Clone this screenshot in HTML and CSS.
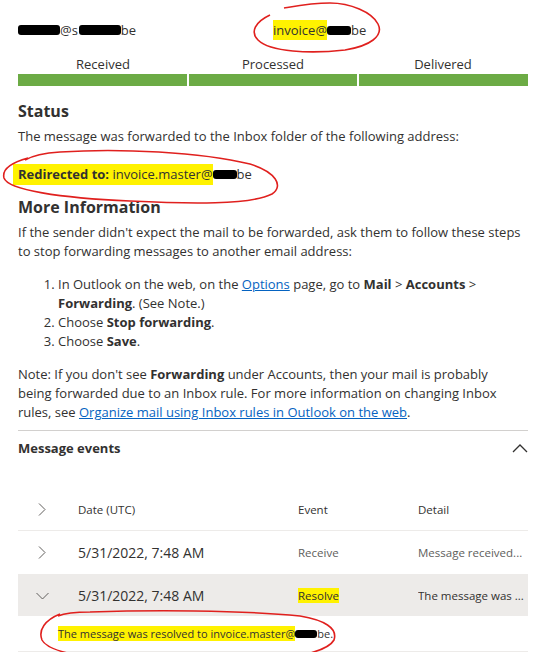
FILE: index.html
```html
<!DOCTYPE html>
<html>
<head>
<meta charset="utf-8">
<link rel="stylesheet" href="styles.css">
</head>
<body>
<div class="page">
  <div class="addresses">
    <div class="addr"><span class="redact r1"></span>@s<span class="redact r2"></span>be</div>
    <div class="addr"><span class="hl">invoice@</span><span class="redact r3"></span>be</div>
  </div>
  <div class="stages">
    <div class="stage">Received</div>
    <div class="stage">Processed</div>
    <div class="stage">Delivered</div>
  </div>
  <div class="bars">
    <div class="bar"></div>
    <div class="bar"></div>
    <div class="bar"></div>
  </div>

  <h2 class="heading status-h">Status</h2>
  <p class="text status-text">The message was forwarded to the Inbox folder of the following address:</p>
  <p class="text redirect"><span class="hl hl-wide"><b>Redirected to:</b> invoice.master@</span><span class="redact r4"></span>be</p>

  <h2 class="heading more-h">More Information</h2>
  <p class="text para">If the sender didn't expect the mail to be forwarded, ask them to follow these steps to stop forwarding messages to another email address:</p>
  <ol class="steps">
    <li>In Outlook on the web, on the <a class="link" href="#">Options</a> page, go to <b>Mail</b> &gt; <b>Accounts</b> &gt; <b>Forwarding</b>. (See Note.)</li>
    <li>Choose <b>Stop forwarding</b>.</li>
    <li>Choose <b>Save</b>.</li>
  </ol>
  <p class="text note">Note: If you don't see <b>Forwarding</b> under Accounts, then your mail is probably being forwarded due to an Inbox rule. For more information on changing Inbox rules, see <a class="link" href="#">Organize mail using Inbox rules in Outlook on the web</a>.</p>

  <div class="events-head">
    <span class="events-title">Message events</span>
    <svg class="chev-up" width="16" height="10" viewBox="0 0 16 10"><path d="M1 9 L8 2 L15 9" fill="none" stroke="#323130" stroke-width="1.3"/></svg>
  </div>

  <div class="table">
    <div class="row head-row">
      <div class="cell chev"><svg width="8" height="13" viewBox="0 0 8 13"><path d="M1 0.5 L7 6.5 L1 12.5" fill="none" stroke="#605e5c" stroke-width="1"/></svg></div>
      <div class="cell small">Date (UTC)</div>
      <div class="cell small">Event</div>
      <div class="cell small">Detail</div>
    </div>
    <div class="row">
      <div class="cell chev"><svg width="8" height="13" viewBox="0 0 8 13"><path d="M1 0.5 L7 6.5 L1 12.5" fill="none" stroke="#605e5c" stroke-width="1"/></svg></div>
      <div class="cell date">5/31/2022, 7:48 AM</div>
      <div class="cell small muted">Receive</div>
      <div class="cell small muted">Message received...</div>
    </div>
    <div class="row selected">
      <div class="cell chev"><svg width="13" height="8" viewBox="0 0 13 8"><path d="M0.5 1 L6.5 7 L12.5 1" fill="none" stroke="#605e5c" stroke-width="1"/></svg></div>
      <div class="cell date">5/31/2022, 7:48 AM</div>
      <div class="cell small"><span class="hl">Resolve</span></div>
      <div class="cell small">The message was ...</div>
    </div>
    <div class="detail-row">
      <span class="hl">The message was resolved to invoice.master@</span><span class="redact r5"></span>be.
    </div>
  </div>
</div>
<svg class="marks" width="544" height="669" viewBox="0 0 544 669">
  <path d="M270 15 C255 22 250 32 258 40 C270 52 310 54 345 50 C370 46 384 36 378 24 C372 12 350 3 330 3 C312 3 296 6 284 8" fill="none" stroke="#e0201e" stroke-width="1.6"/>
  <path d="M28 158 C10 163 2 170 4 178 C8 190 60 198 130 201 C190 204 250 205 272 194 C284 186 276 172 250 164 C200 152 120 148 60 152 C45 153 32 156 25 160" fill="none" stroke="#e0201e" stroke-width="1.6"/>
  <path d="M60 614 C45 620 38 630 42 640 C50 656 120 664 200 663 C270 662 325 656 334 640 C338 628 324 620 300 616 C240 610 150 610 90 612 C75 612 65 613 58 616" fill="none" stroke="#e0201e" stroke-width="1.6"/>
</svg>
</body>
</html>
```

FILE: styles.css
```css
* { box-sizing: border-box; }
body {
  margin: 0;
  background: #ffffff;
  color: #323130;
  font-family: "Open Sans", "Noto Sans", sans-serif;
  font-size: 13px;
  position: relative;
}
.page {
  padding: 20px 16px 0 18px;
  width: 544px;
}
.addresses {
  display: grid;
  grid-template-columns: 1fr 1fr;
  line-height: 20px;
  font-size: 13px;
}
.addr { display: flex; align-items: center; }
.redact {
  display: inline-block;
  height: 10px;
  background: #000;
  border-radius: 3px;
}
.r1 { width: 42px; }
.r2 { width: 42px; margin-left: 1px; }
.r3 { width: 24px; height: 9px; }
.r4 { width: 24px; height: 9px; }
.r5 { width: 22px; height: 8px; }
.hl { background: #fff200; }
.hl-wide { padding-left: 5px; margin-left: -5px; padding-top: 1px; padding-bottom: 2px; }
.stages {
  display: grid;
  grid-template-columns: 1fr 1fr 1fr;
  margin-top: 14px;
  line-height: 20px;
  text-align: center;
  font-size: 13px;
}
.bars {
  display: grid;
  grid-template-columns: 1fr 1fr 1fr;
  gap: 2px;
  height: 12px;
}
.bar { background: #6cab45; }
.heading {
  margin: 0;
  font-size: 16px;
  font-weight: 700;
  line-height: 22px;
}
.status-h { margin-top: 14px; }
.text { margin: 0; line-height: 19px; }
.status-text { margin-top: 5px; }
.redirect { margin-top: 18px; line-height: 20px; }
.more-h { margin-top: 12px; }
.para { margin-top: 5px; }
.steps {
  margin: 14px 0 0 0;
  padding-left: 40px;
  line-height: 19px;
}
.note { margin-top: 14px; max-width: 482px; }
.link { color: #0563c1; text-decoration: underline; }
.events-head {
  margin-top: 8px;
  border-top: 1px solid #d2d0ce;
  padding-top: 7px;
  display: flex;
  justify-content: space-between;
  align-items: center;
  line-height: 20px;
}
.events-title { font-weight: 700; font-size: 13px; }
.table { margin-top: 30px; }
.row {
  display: grid;
  grid-template-columns: 60px 220px 120px 1fr;
  align-items: center;
  height: 44px;
  border-bottom: 1px solid #edebe9;
}
.row.head-row { height: 43px; }
.row.selected {
  background: #edebe9;
  height: 41px;
  border-bottom: none;
}
.cell { white-space: nowrap; overflow: hidden; }
.chev { display: flex; justify-content: center; align-items: center; padding-right: 12px; }
.small { font-size: 11.5px; }
.muted { color: #605e5c; }
.date { font-size: 14px; }
.detail-row {
  height: 36px;
  display: flex;
  align-items: center;
  padding-left: 40px;
  font-size: 11px;
  border-bottom: 1px solid #edebe9;
}
.marks {
  position: absolute;
  left: 0;
  top: 0;
  pointer-events: none;
}
```
